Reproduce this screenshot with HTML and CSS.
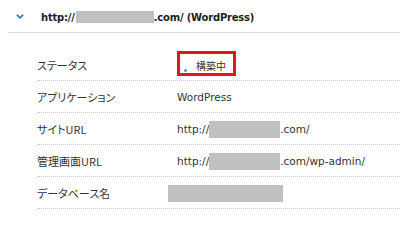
FILE: index.html
```html
<!DOCTYPE html>
<html lang="ja">
<head>
<meta charset="utf-8">
<title>WordPress</title>
<link rel="stylesheet" href="styles.css">
</head>
<body>
<div class="panel">
  <div class="panel-head">
    <svg class="chevron" width="8" height="5" viewBox="0 0 8 5"><polyline points="0.8,0.8 4,3.8 7.2,0.8" fill="none" stroke="#2a84a6" stroke-width="1.8"/></svg>
    <span class="head-title">http://<span class="mask mask-head"></span>.com/ (WordPress)</span>
  </div>
  <div class="rows">
    <div class="row">
      <div class="label">ステータス</div>
      <div class="value"><span class="status"><span class="dot"></span><span class="status-text">構築中</span></span></div>
    </div>
    <div class="row">
      <div class="label">アプリケーション</div>
      <div class="value">WordPress</div>
    </div>
    <div class="row">
      <div class="label">サイトURL</div>
      <div class="value">http://<span class="mask mask-url"></span>.com/</div>
    </div>
    <div class="row">
      <div class="label">管理画面URL</div>
      <div class="value">http://<span class="mask mask-url"></span>.com/wp-admin/</div>
    </div>
    <div class="row">
      <div class="label">データベース名</div>
      <div class="value"><span class="mask mask-db"></span></div>
    </div>
  </div>
</div>
</body>
</html>
```

FILE: styles.css
```css
html, body {
  margin: 0;
  padding: 0;
  background: #ffffff;
}
body {
  font-family: "DejaVu Sans", "Noto Sans CJK JP", sans-serif;
  color: #333333;
  width: 400px;
  height: 216px;
  overflow: hidden;
}
.panel-head {
  margin-left: 8px;
  border-bottom: 1px solid #dcdcdc;
  display: flex;
  align-items: center;
  padding-left: 8px;
  padding-top: 2px;
  box-sizing: border-box;
  height: 33px;
}
.chevron {
  display: block;
  margin-right: 17px;
  margin-top: -1px;
}
.head-title {
  font-weight: bold;
  font-size: 10px;
  letter-spacing: -0.2px;
  color: #222222;
  display: flex;
  align-items: center;
  white-space: nowrap;
}
.mask {
  display: inline-block;
  background: #c0c0c0;
  vertical-align: middle;
}
.mask-head {
  width: 78px;
  height: 12px;
  margin-left: 1px;
}
.rows {
  margin-top: 16px;
  margin-left: 37px;
}
.row {
  display: grid;
  grid-template-columns: 140px 1fr;
  align-items: center;
  height: 32px;
  box-sizing: border-box;
  border-bottom: 1px dotted #c8c8c8;
}
.label {
  font-family: "Noto Sans CJK JP", "DejaVu Sans", sans-serif;
  font-size: 11px;
  font-feature-settings: "palt";
  color: #333333;
}
.value {
  font-size: 10.5px;
  display: flex;
  align-items: center;
  white-space: nowrap;
  color: #333333;
}
.mask-url {
  width: 71px;
  height: 17px;
  margin-top: 2px;
}
.mask-db {
  width: 115px;
  height: 17px;
  margin-left: -9px;
  margin-top: 1px;
}
.status {
  display: flex;
  align-items: center;
  width: 59px;
  height: 25px;
  box-sizing: border-box;
  border: 3px solid #e3141b;
  padding-left: 4px;
  margin-top: -2px;
}
.dot {
  width: 3px;
  height: 3px;
  border-radius: 50%;
  background: #3a9fd0;
  align-self: flex-end;
  margin-bottom: 1px;
}
.status-text {
  font-family: "Noto Sans CJK JP", sans-serif;
  font-size: 10px;
  margin-left: 9px;
  margin-top: 3px;
  color: #333333;
}
```
